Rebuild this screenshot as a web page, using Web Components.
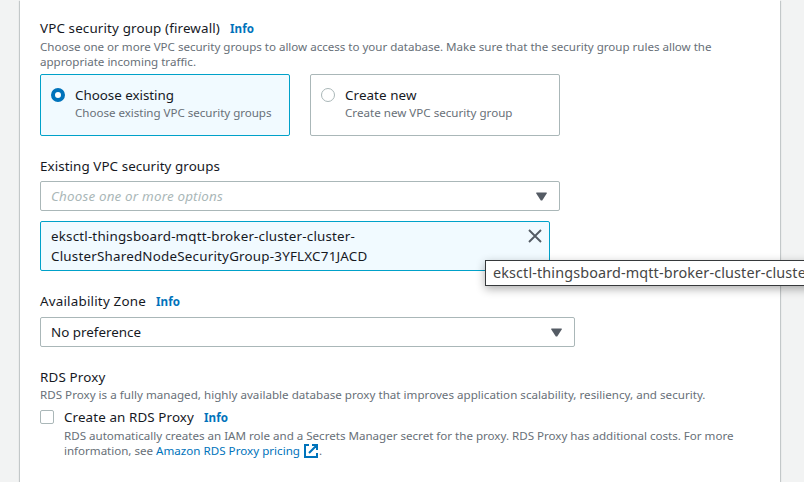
<!DOCTYPE html>
<html lang="en">
<head>
<meta charset="utf-8">
<title>Connectivity</title>
<style>
html,body{margin:0;height:100%;overflow:hidden;background:#f2f3f3}
body{font-family:"Noto Sans","Open Sans",sans-serif;font-size:13.4px;color:#16191f}
</style>
</head>
<body>
<db-connectivity></db-connectivity>
<script>
const define = (name, html, setup) => {
  const t = document.createElement('template');
  t.innerHTML = html;
  customElements.define(name, class extends HTMLElement {
    connectedCallback() {
      if (this.shadowRoot) return;
      this.attachShadow({mode: 'open'}).append(t.content.cloneNode(true));
      if (setup) setup(this, this.shadowRoot);
    }
  });
};

// One line of text, tracked so that it takes the width given in "w".
define('ui-line', `<style>
:host{display:inline-block;white-space:pre;line-height:22px;vertical-align:top}
:host([kind=hint]){font-size:11.6px;line-height:15px;color:#687078}
:host([kind=link]){font-size:11.6px;line-height:15px;color:#0073bb}
:host([kind=info]){font-size:11.6px;font-weight:700;color:#0073bb;margin-left:10px}
:host([kind=placeholder]){font-style:italic;color:#aab7b8}
span{display:inline-block}
</style><span><slot></slot></span>`, (el, root) => {
  const w = +el.getAttribute('w');
  if (!w) return;
  const span = root.querySelector('span');
  const n = el.textContent.length;
  span.style.fontVariantLigatures = 'none';
  span.style.letterSpacing = (w - span.getBoundingClientRect().width) / n + 'px';
});

define('ui-tile', `<style>
:host{display:flex;box-sizing:border-box;width:250px;height:62px;border:1px solid #aab7b8;border-radius:2px;padding:9px 10px;background:#fff}
:host([checked]){border-color:#00a1c9;background:#f1faff}
i{box-sizing:border-box;flex:none;width:14px;height:14px;margin:4px 10px 0 0;border:1px solid #aab7b8;border-radius:50%;background:#fff}
:host([checked]) i{border:4px solid #0073bb}
div{display:flex;flex-direction:column;align-items:flex-start}
</style><i></i><div><slot></slot></div>`);

define('ui-select', `<style>
:host{display:flex;box-sizing:border-box;height:30px;border:1px solid #aab7b8;border-radius:2px;align-items:center;justify-content:space-between;padding:0 12px 0 10px;background:#fff}
svg{display:block}
</style><slot></slot><svg width="11" height="9" viewBox="0 0 11 9"><path d="M.3 .5h10.4v1L6.2 8.5H4.8L.3 1.5z" fill="#545b64"/></svg>`);

define('ui-token', `<style>
:host{display:flex;box-sizing:border-box;width:510px;height:50px;border:1px solid #00a1c9;border-radius:2px;background:#f1faff;padding:3px 7px 0 10px;justify-content:space-between}
div{display:flex;flex-direction:column;align-items:flex-start}
::slotted(ui-line){height:20px}
svg{margin-top:4px}
</style><div><slot></slot></div><svg width="14" height="14" viewBox="0 0 14 14"><path d="M1 1l12 12M13 1L1 13" stroke="#545b64" stroke-width="1.9"/></svg>`);

define('ui-check', `<style>
:host{display:flex}
i{box-sizing:border-box;flex:none;width:14px;height:14px;margin:4px 10px 0 0;border:1px solid #aab7b8;border-radius:2px;background:#fff}
div{display:flex;flex-direction:column;align-items:flex-start}
</style><i></i><div><slot></slot></div>`);

define('ui-external', `<style>
:host{display:inline-block;width:14px;height:14px;margin:1px 1px 0 4px}
svg{display:block}
</style><svg width="14" height="14" viewBox="0 0 14 14" fill="none" stroke="#0073bb" stroke-width="2"><path d="M5 1H1v12h12V9M8 1h5v5M12.5 1.5L5 9"/></svg>`);

define('ui-tooltip', `<style>
:host{position:absolute;left:485px;top:260px;box-sizing:border-box;width:360px;height:26px;border:1px solid #36393b;background:#fff;color:#454545;padding:0 7px;box-shadow:0 3px 10px rgba(0,0,0,.32);font-size:14.4px}
::slotted(ui-line){line-height:23px}
</style><slot></slot>`);

define('db-connectivity', `<style>
:host{display:block;position:relative;width:804px;height:482px;overflow:hidden}
main{box-sizing:border-box;width:760px;height:492px;margin-left:20px;padding:17px 20px;background:#fff;box-shadow:0 1px 1px rgba(0,28,36,.3),1px 1px 1px rgba(0,28,36,.15),-1px 1px 1px rgba(0,28,36,.15)}
header{height:22px;display:flex;align-items:baseline}
.hint{display:flex;flex-direction:column;align-items:flex-start}
.tiles{display:flex;gap:20px;margin:5px 0 20px}
section{margin-bottom:20px}
.group ui-select{width:520px;margin:4px 0 10px}
.group header,.zone header,.proxy>header{margin-top:-1px}
.zone ui-select{width:535px;margin-top:5px}
.proxy .hint{margin:-1px 0 4px}
.last{display:flex;height:15px}
</style>
<main>
<header><ui-line w="180">VPC security group (firewall)</ui-line><ui-line kind="info" w="24">Info</ui-line></header>
<div class="hint"><ui-line kind="hint" w="671.5">Choose one or more VPC security groups to allow access to your database. Make sure that the security group rules allow the</ui-line><ui-line kind="hint" w="156">appropriate incoming traffic.</ui-line></div>
<div class="tiles"><ui-tile checked><ui-line w="99">Choose existing</ui-line><ui-line kind="hint" w="196.5" style="margin-top:-1px">Choose existing VPC security groups</ui-line></ui-tile><ui-tile><ui-line w="71.5">Create new</ui-line><ui-line kind="hint" w="167.5" style="margin-top:-1px">Create new VPC security group</ui-line></ui-tile></div>
<section class="group"><header><ui-line w="180">Existing VPC security groups</ui-line></header>
<ui-select><ui-line kind="placeholder" w="172">Choose one or more options</ui-line></ui-select>
<ui-token><ui-line w="304">eksctl-thingsboard-mqtt-broker-cluster-cluster-</ui-line><ui-line w="316.5">ClusterSharedNodeSecurityGroup-3YFLXC71JACD</ui-line></ui-token></section>
<section class="zone"><header><ui-line w="106">Availability Zone</ui-line><ui-line kind="info" w="24">Info</ui-line></header>
<ui-select><ui-line w="90">No preference</ui-line></ui-select></section>
<section class="proxy"><header><ui-line w="65.5">RDS Proxy</ui-line></header>
<div class="hint"><ui-line kind="hint" w="665.5">RDS Proxy is a fully managed, highly available database proxy that improves application scalability, resiliency, and security.</ui-line></div>
<ui-check><header><ui-line w="130">Create an RDS Proxy</ui-line><ui-line kind="info" w="24">Info</ui-line></header>
<ui-line kind="hint" w="669.5">RDS automatically creates an IAM role and a Secrets Manager secret for the proxy. RDS Proxy has additional costs. For more</ui-line>
<div class="last"><ui-line kind="hint" w="92">information, see </ui-line><ui-line kind="link" w="144">Amazon RDS Proxy pricing</ui-line><ui-external></ui-external><ui-line kind="hint">.</ui-line></div></ui-check></section>
</main>
<ui-tooltip><ui-line w="319">eksctl-thingsboard-mqtt-broker-cluster-cluster</ui-line></ui-tooltip>`);
</script>
</body>
</html>
